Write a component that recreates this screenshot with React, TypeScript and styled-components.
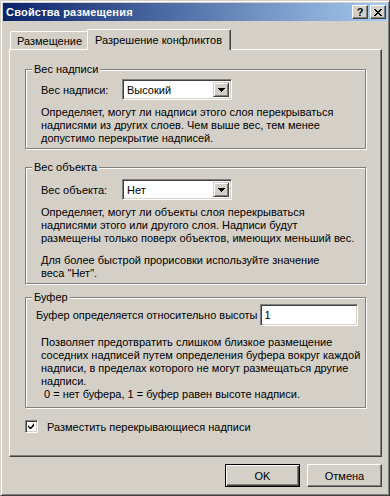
import React from "react";
import styled, { createGlobalStyle } from "styled-components";

const GlobalStyle = createGlobalStyle`
  html, body {
    margin: 0;
    padding: 0;
    background: #d4d0c8;
  }
  body {
    font-family: "Liberation Sans", Arial, sans-serif;
    font-size: 11px;
    color: #000;
  }
  * {
    box-sizing: border-box;
  }
`;

const Window = styled.div`
  width: 390px;
  height: 496px;
  background: #d4d0c8;
  border: 1px solid;
  border-color: #d4d0c8 #404040 #404040 #d4d0c8;
  box-shadow: inset 1px 1px 0 #fff, inset -1px -1px 0 #808080;
  padding: 2px;
  display: flex;
  flex-direction: column;
`;

const TitleBar = styled.div`
  height: 18px;
  display: flex;
  align-items: center;
  justify-content: space-between;
  padding: 0 1px 0 3px;
  background: linear-gradient(to right, #0a246a, #a6caf0);
`;

const Title = styled.span`
  color: #fff;
  font-weight: bold;
  font-size: 11px;
  letter-spacing: 0.2px;
`;

const TitleButtons = styled.div`
  display: flex;
  gap: 2px;
`;

const TitleButton = styled.div`
  width: 16px;
  height: 14px;
  background: #d4d0c8;
  border: 1px solid;
  border-color: #fff #404040 #404040 #fff;
  box-shadow: inset -1px -1px 0 #808080;
  display: flex;
  align-items: center;
  justify-content: center;
  font-weight: bold;
  font-size: 11px;
  line-height: 1;
`;

const Body = styled.div`
  flex: 1;
  display: flex;
  flex-direction: column;
  padding: 8px 5px 6px 6px;
`;

const TabStrip = styled.div`
  height: 20px;
  display: flex;
  align-items: flex-end;
  padding-left: 1px;
  position: relative;
  z-index: 2;
`;

const Tab = styled.div<{ $active?: boolean }>`
  display: flex;
  align-items: center;
  background: #d4d0c8;
  border-top: 1px solid #fff;
  border-left: 1px solid #fff;
  border-right: 1px solid #404040;
  border-top-left-radius: 2px;
  border-top-right-radius: 2px;
  box-shadow: inset -1px 0 0 #808080;
  height: ${(p) => (p.$active ? "21px" : "18px")};
  margin-bottom: ${(p) => (p.$active ? "-1px" : "0")};
  margin-left: ${(p) => (p.$active ? "-2px" : "0")};
  padding: ${(p) => (p.$active ? "0 8px 1px 7px" : "0 6px 0 6px")};
  white-space: nowrap;
`;

const Panel = styled.div`
  height: 408px;
  border: 1px solid;
  border-color: #fff #404040 #404040 #fff;
  box-shadow: inset -1px -1px 0 #808080;
  padding: 13px 15px 0 15px;
  display: flex;
  flex-direction: column;
`;

const Group = styled.fieldset<{ $gap: number }>`
  margin: ${(p) => p.$gap}px 0 0 0;
  padding: 0 0 3px 0;
  border: 1px solid #808080;
  box-shadow: inset 1px 1px 0 #fff, 1px 1px 0 #fff;
  min-width: 0;
`;

const Legend = styled.legend`
  margin-left: 6px;
  padding: 0 2px;
  line-height: 13px;
  background: #d4d0c8;
`;

const GroupBody = styled.div<{ $indent: number; $top: number; $bottom: number }>`
  padding: ${(p) => p.$top}px 0 ${(p) => p.$bottom}px ${(p) => p.$indent}px;
`;

const Row = styled.div`
  display: flex;
  align-items: center;
`;

const FieldLabel = styled.span<{ $width?: number }>`
  width: ${(p) => (p.$width ? `${p.$width}px` : "auto")};
  white-space: nowrap;
`;

const Sunken = styled.div<{ $width: number; $height: number; $gap?: number }>`
  width: ${(p) => p.$width}px;
  height: ${(p) => p.$height}px;
  margin-left: ${(p) => p.$gap ?? 0}px;
  background: #fff;
  border: 1px solid;
  border-color: #808080 #fff #fff #808080;
  box-shadow: inset 1px 1px 0 #404040, inset -1px -1px 0 #d4d0c8;
  display: flex;
  align-items: center;
  padding: 2px;
`;

const FieldText = styled.span`
  flex: 1;
  padding-left: 2px;
  white-space: nowrap;
`;

const DropButton = styled.div`
  width: 16px;
  height: 100%;
  background: #d4d0c8;
  border: 1px solid;
  border-color: #d4d0c8 #404040 #404040 #d4d0c8;
  box-shadow: inset 1px 1px 0 #fff, inset -1px -1px 0 #808080;
  display: flex;
  align-items: center;
  justify-content: center;
`;

const Description = styled.p<{ $top: number; $indent?: number }>`
  margin: ${(p) => p.$top}px 0 0 0;
  padding-left: ${(p) => p.$indent ?? 0}px;
  line-height: 13px;
  white-space: nowrap;
`;

const CheckRow = styled.label`
  display: flex;
  align-items: center;
  gap: 9px;
  margin-top: 12px;
`;

const CheckBox = styled.span`
  width: 13px;
  height: 13px;
  background: #fff;
  border: 1px solid;
  border-color: #808080 #fff #fff #808080;
  box-shadow: inset 1px 1px 0 #404040, inset -1px -1px 0 #d4d0c8;
  display: flex;
  align-items: center;
  justify-content: center;
`;

const ButtonRow = styled.div`
  display: flex;
  justify-content: flex-end;
  gap: 7px;
  margin-top: 7px;
`;

const Button = styled.button<{ $default?: boolean }>`
  width: 75px;
  height: 23px;
  font-family: "Liberation Sans", Arial, sans-serif;
  font-size: 11px;
  color: #000;
  background: #d4d0c8;
  padding: 0;
  border: 1px solid;
  border-color: ${(p) => (p.$default ? "#000" : "#fff #404040 #404040 #fff")};
  box-shadow: ${(p) =>
    p.$default
      ? "inset 1px 1px 0 #fff, inset -1px -1px 0 #404040, inset -2px -2px 0 #808080"
      : "inset -1px -1px 0 #808080"};
`;

const Arrow = () => (
  <svg width="7" height="4" viewBox="0 0 7 4">
    <path d="M0 0h7v1H0zM1 1h5v1H1zM2 2h3v1H2zM3 3h1v1H3z" fill="#000" />
  </svg>
);

const Combo: React.FC<{ value: string }> = ({ value }) => (
  <Sunken $width={110} $height={21}>
    <FieldText>{value}</FieldText>
    <DropButton>
      <Arrow />
    </DropButton>
  </Sunken>
);

const App: React.FC = () => {
  return (
    <>
      <GlobalStyle />
      <Window>
        <TitleBar>
          <Title>Свойства размещения</Title>
          <TitleButtons>
            <TitleButton>?</TitleButton>
            <TitleButton>
              <svg width="8" height="7" viewBox="0 0 8 7">
                <path
                  d="M0 0h2v1H0zM6 0h2v1H6zM1 1h2v1H1zM5 1h2v1H5zM2 2h4v1H2zM3 3h2v1H3zM2 4h4v1H2zM1 5h2v1H1zM5 5h2v1H5zM0 6h2v1H0zM6 6h2v1H6z"
                  fill="#000"
                />
              </svg>
            </TitleButton>
          </TitleButtons>
        </TitleBar>
        <Body>
          <TabStrip>
            <Tab>Размещение</Tab>
            <Tab $active>Разрешение конфликтов</Tab>
          </TabStrip>
          <Panel>
            <Group $gap={0}>
              <Legend>Вес надписи</Legend>
              <GroupBody $indent={15} $top={3} $bottom={0}>
                <Row>
                  <FieldLabel $width={81}>Вес надписи:</FieldLabel>
                  <Combo value="Высокий" />
                </Row>
                <Description $top={6}>
                  Определяет, могут ли надписи этого слоя перекрываться
                  <br />
                  надписями из других слоев. Чем выше вес, тем менее
                  <br />
                  допустимо перекрытие надписей.
                </Description>
              </GroupBody>
            </Group>
            <Group $gap={12}>
              <Legend>Вес объекта</Legend>
              <GroupBody $indent={15} $top={5} $bottom={0}>
                <Row>
                  <FieldLabel $width={81}>Вес объекта:</FieldLabel>
                  <Combo value="Нет" />
                </Row>
                <Description $top={6}>
                  Определяет, могут ли объекты слоя перекрываться
                  <br />
                  надписями этого или другого слоя. Надписи будут
                  <br />
                  размещены только поверх объектов, имеющих меньший вес.
                </Description>
                <Description $top={9}>
                  Для более быстрой прорисовки используйте значение
                  <br />
                  веса "Нет".
                </Description>
              </GroupBody>
            </Group>
            <Group $gap={7}>
              <Legend>Буфер</Legend>
              <GroupBody $indent={10} $top={0} $bottom={3}>
                <Row>
                  <FieldLabel>Буфер определяется относительно высоты</FieldLabel>
                  <Sunken $width={98} $height={22} $gap={2}>
                    <FieldText>1</FieldText>
                  </Sunken>
                </Row>
                <Description $top={10} $indent={5}>
                  Позволяет предотвратить слишком близкое размещение
                  <br />
                  соседних надписей путем определения буфера вокруг каждой
                  <br />
                  надписи, в пределах которого не могут размещаться другие
                  <br />
                  надписи.
                  <br />
                  &nbsp;0 = нет буфера, 1 = буфер равен высоте надписи.
                </Description>
              </GroupBody>
            </Group>
            <CheckRow>
              <CheckBox>
                <svg width="7" height="7" viewBox="0 0 7 7">
                  <path d="M6 0v3L3 6H2L0 4V2l2 2h1L6 0z" fill="#000" />
                </svg>
              </CheckBox>
              <span>Разместить перекрывающиеся надписи</span>
            </CheckRow>
          </Panel>
          <ButtonRow>
            <Button $default>OK</Button>
            <Button>Отмена</Button>
          </ButtonRow>
        </Body>
      </Window>
    </>
  );
};

export default App;
